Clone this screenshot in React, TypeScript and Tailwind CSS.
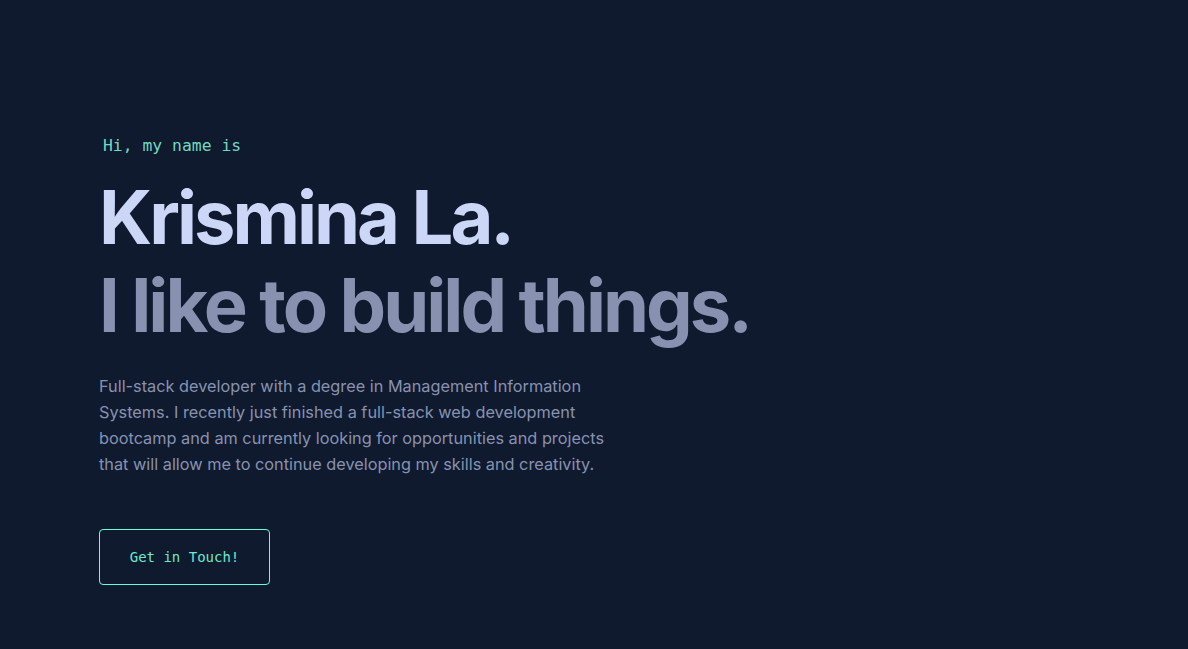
import React from "react";

export default function App() {
  return (
    <div className="w-full h-[649px] bg-[#0f1a2e] overflow-hidden">
      <section className="pl-[99px] pt-[134px] flex flex-col items-start">
        <h1 className="ml-[4px] text-[16.4px] leading-[24px] text-[#70d9c0] font-normal font-['DejaVu_Sans_Mono',monospace]">
          Hi, my name is
        </h1>
        <h2 className="mt-[15px] text-[74px] leading-[88px] font-bold text-[#ccd6f6] tracking-[-3px] font-['Inter',sans-serif]">
          Krismina La.
        </h2>
        <h3 className="text-[74px] leading-[88px] font-bold text-[#8892b0] tracking-[-3px] font-['Inter',sans-serif]">
          I like to build things.
        </h3>
        <p className="mt-[24px] max-w-[516px] text-[16.3px] leading-[26px] text-[#8892b0] font-['Inter',sans-serif]">
          Full-stack developer with a degree in Management Information Systems. I recently just finished a full-stack web development bootcamp and am currently looking for opportunities and projects that will allow me to continue developing my skills and creativity.
        </p>
        <button className="mt-[52px] w-[171px] h-[56px] border border-[#64ffda] rounded-[4px] text-[14px] text-[#6ee8cb] flex items-center justify-center font-['DejaVu_Sans_Mono',monospace]">
          Get in Touch!
        </button>
      </section>
    </div>
  );
}
